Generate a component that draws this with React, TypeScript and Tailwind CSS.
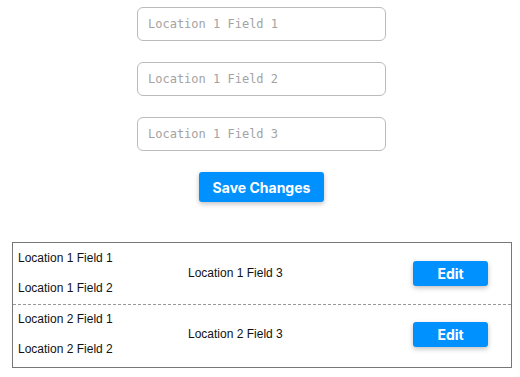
const fields = ['Location 1 Field 1', 'Location 1 Field 2', 'Location 1 Field 3'];

const locations = [
  { a: 'Location 1 Field 1', b: 'Location 1 Field 2', c: 'Location 1 Field 3' },
  { a: 'Location 2 Field 1', b: 'Location 2 Field 2', c: 'Location 2 Field 3' },
];

export default function App() {
  return (
    <div className="min-h-[377px] bg-white font-['Liberation_Sans',Arial,sans-serif]">
      <div className="flex flex-col items-center gap-[21px] pt-[7px] pl-[3px]">
        {fields.map((f) => (
          <input
            key={f}
            placeholder={f}
            className="w-[249px] h-[34px] px-[10px] border border-[#bbbbbb] rounded-[6px] text-[12px] font-['DejaVu_Sans_Mono',monospace] placeholder:text-[#a3a3a3] outline-none"
          />
        ))}
        <button className="w-[125px] h-[30px] bg-[#0091ff] text-white text-[14px] font-bold font-['Inter',sans-serif] rounded-[3px] shadow-[0_2px_5px_rgba(0,0,0,0.25)]">
          Save Changes
        </button>
      </div>

      <div className="mt-[40px] ml-[12px] w-[500px] border border-[#777777]">
        {locations.map((loc, i) => (
          <div
            key={i}
            className={`flex items-center text-[12px] text-[#111] ${
              i === 0 ? 'border-b border-dashed border-[#999999] pt-[8px] pb-[9px]' : 'pt-[7px] pb-[11px]'
            }`}
          >
            <div className="w-[175px] pl-[5px] flex flex-col gap-[16px]">
              <span className="leading-[14px]">{loc.a}</span>
              <span className="leading-[14px]">{loc.b}</span>
            </div>
            <div className="flex-1 leading-[14px]">{loc.c}</div>
            <button className="w-[75px] h-[25px] mr-[23px] bg-[#0091ff] text-white text-[14px] font-bold font-['Inter',sans-serif] rounded-[3px] shadow-[0_2px_5px_rgba(0,0,0,0.25)]">
              Edit
            </button>
          </div>
        ))}
      </div>
    </div>
  );
}
